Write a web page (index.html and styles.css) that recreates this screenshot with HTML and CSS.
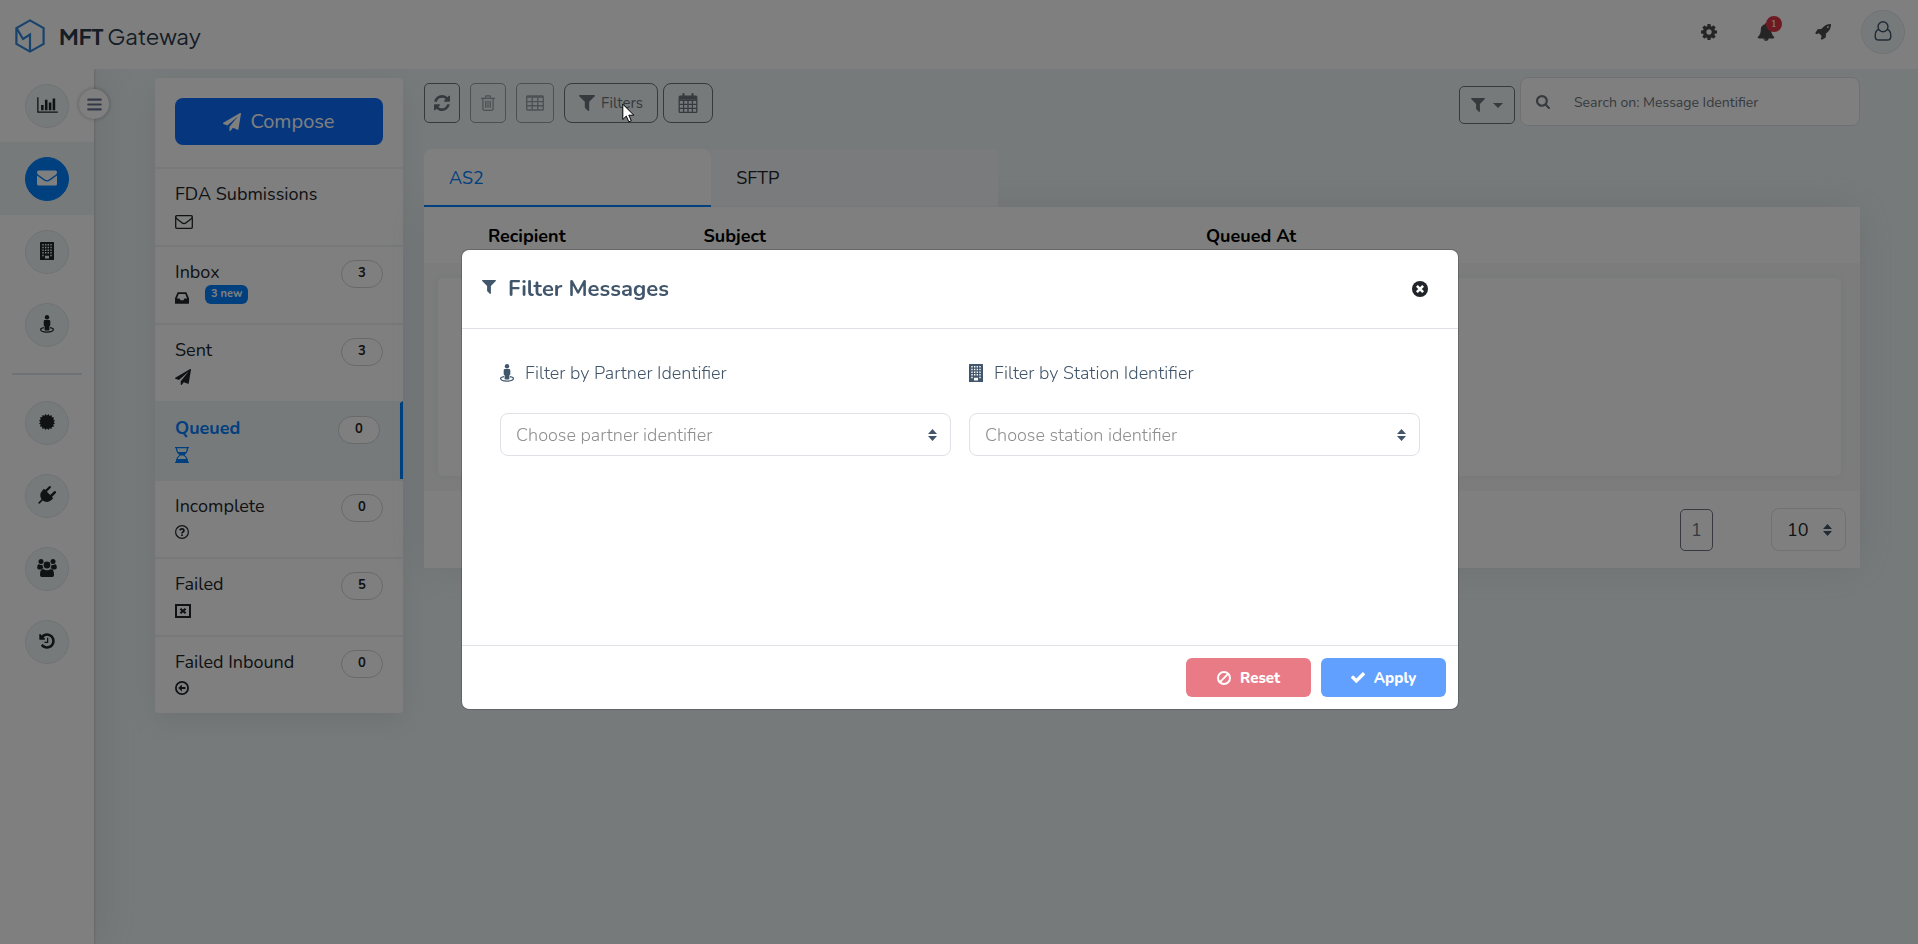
FILE: index.html
```html
<!DOCTYPE html>
<html lang="en">
<head>
  <meta charset="UTF-8" />
  <meta name="viewport" content="width=device-width, initial-scale=1.0"/>
  <title>MFT Gateway</title>
  <link rel="stylesheet" href="styles.css">
</head>
<body>
  <!-- Icons -->
  <svg class="sprite" aria-hidden="true">
    <symbol id="i-chart" viewBox="0 0 2048 1792"><path d="M640 896v512h-256v-512h256zm384-512v1024h-256v-1024h256zm1024 1152v128h-2048v-1536h128v1408h1920zm-640-896v768h-256v-768h256zm384-384v1152h-256v-1152h256z"/></symbol>
    <symbol id="i-mail" viewBox="0 0 16 16"><path d="M0 3.3Q0 2 1.300 2h13.400Q16 2 16 3.300c0 1-.7 1.900-1.600 2.500L9.600 9.200q-1.600 1-3.200 0L1.600 5.800C.7 5.200 0 4.400 0 3.300zM0 5.900q.5.500 1.100.9l4.500 3.200q2.400 1.400 4.800 0l4.500-3.200q.6-.4 1.100-.9v6.800q0 1.300-1.300 1.300H1.300Q0 14 0 12.700z"/></symbol>
    <symbol id="i-mail-o" viewBox="0 0 18 14"><path fill="none" stroke="currentColor" stroke-width="1.300" stroke-linejoin="round" d="M.7 1.800Q.7.700 1.800.700h14.400q1.100 0 1.100 1.100v10.400q0 1.100-1.100 1.100H1.800q-1.100 0-1.100-1.100zM.9 2.500q.6 1 1.800 1.900l4.500 3.500q1.800 1.300 3.600 0l4.500-3.500q1.200-.9 1.800-1.900"/></symbol>
    <symbol id="i-building" viewBox="0 0 14 18"><path fill-rule="evenodd" d="M.6 0h12.800q.6 0 .6.600v16.800q0 .6-.6.600H.6q-.6 0-.6-.6V.6Q0 0 .6 0zM2.300 2v1.500h1.400V2zm2.700 0v1.500h1.400V2zm2.600 0v1.500H9V2zm2.700 0v1.500h1.400V2zM2.300 4.700v1.500h1.400V4.700zm2.700 0v1.500h1.400V4.700zm2.600 0v1.500H9V4.700zm2.700 0v1.500h1.400V4.700zM2.300 7.400v1.500h1.400V7.400zm2.700 0v1.500h1.400V7.400zm2.600 0v1.500H9V7.400zm2.700 0v1.500h1.400V7.400zM2.300 10.100v1.500h1.400v-1.500zm2.700 0v1.500h1.400v-1.500zm2.600 0v1.500H9v-1.500zm2.700 0v1.500h1.400v-1.500zM2.300 12.800v1.500h1.400v-1.500zm8 0v1.500h1.400v-1.500zM5 13.800v2.600h4v-2.600z"/></symbol>
    <symbol id="i-person" viewBox="0 0 14 18"><circle cx="7" cy="2.300" r="2.200"/><path d="M5 4.900h4q1.300 0 1.300 1.300v4q0 .8-.9.800v3.800q0 .7-.7.700H5.300q-.7 0-.7-.7V11q-.9 0-.9-.8v-4q0-1.300 1.300-1.300z"/><path fill="none" stroke="currentColor" stroke-width="1.200" d="M4 12.700c-2 .3-3.400.9-3.400 1.900 0 1.500 2.900 2.500 6.400 2.500s6.400-1 6.400-2.500c0-1-1.400-1.600-3.400-1.900"/></symbol>
    <symbol id="i-cert" viewBox="0 0 16 16"><path d="M8 1.600 9.600 0l1 1.900 2-.8.300 2.200 2.200.3-.8 2L16 6.700 14.600 8 16 9.600l-1.800 1 .8 2-2.200.3-.3 2.200-2-.8L9.600 16 8 14.600 6.400 16l-1-1.800-2 .8-.3-2.200-2.200-.3.800-2L0 9.600 1.500 8 0 6.400l1.800-1-.8-2 2.200-.3.300-2.200 2 .8L6.400 0z"/></symbol>
    <symbol id="i-plug" viewBox="0 0 18 18"><path d="M17.600 5.200q.5.500.5 1t-.5 1L13.900 11l1.300 1.300-1.500 1.500q-1.900 1.900-4.600 2.100-2.400.1-4.400-1.300L1.700 17.600Q1.200 18 .6 17.500t0-1.200l3-3Q2.100 11.300 2.300 9q.2-2.700 2.100-4.600l1.500-1.600 1.300 1.300 3.700-3.700q.5-.5 1.100-.4t.9.900q.2.700-.4 1.200L8.900 5.800l3.300 3.300 3.700-3.700q.8-.8 1.700-.2z"/></symbol>
    <symbol id="i-users" viewBox="0 0 20 18"><circle cx="4" cy="2.600" r="2.500"/><circle cx="16" cy="2.600" r="2.500"/><circle cx="10" cy="6" r="3.400"/><path d="M.2 8.800q0-3.500 1.600-3.500Q4 6.500 5.600 5.900 5.400 8 6.700 9.200 5.300 9.300 4.200 10.400H2Q.2 10.400.2 8.800zm19.600 0q0-3.500-1.600-3.500-2.200 1.200-3.800.6.200 2.100-1.100 3.300 1.400.1 2.500 1.200H18q1.800 0 1.800-1.600zM3 15.400q0-5.400 3-5.500Q10 12.500 14 9.900q3 .1 3 5.500 0 2.600-2.500 2.600h-9Q3 18 3 15.400z"/></symbol>
    <symbol id="i-history" viewBox="0 0 1792 1792"><path d="M1664 896q0 156-61 298t-164 245-245 164-298 61q-172 0-327-72.500t-264-204.500q-7-10-6.500-22.500t8.500-20.500l137-138q10-9 25-9 16 2 23 12 73 95 179 147t225 52q104 0 198.500-40.500t163.500-109.500 109.500-163.500 40.500-198.500-40.500-198.500-109.500-163.500-163.500-109.500-198.500-40.500q-98 0-188 35.500t-160 101.500l137 138q31 30 14 69-17 40-59 40h-448q-26 0-45-19t-19-45v-448q0-42 40-59 39-17 69 14l130 129q107-101 244.500-156.500t284.500-55.500q156 0 298 61t245 164 164 245 61 298zm-640-288v448q0 14-9 23t-23 9h-320q-14 0-23-9t-9-23v-64q0-14 9-23t23-9h224v-352q0-14 9-23t23-9h64q14 0 23 9t9 23z"/></symbol>
    <symbol id="i-bars" viewBox="0 0 16 14"><path fill="none" stroke="currentColor" stroke-width="2.200" stroke-linecap="round" d="M1.300 1.800h13.400M1.300 7h13.400M1.300 12.200h13.400"/></symbol>
    <symbol id="i-plane" viewBox="0 0 1792 1792"><path d="M1764 11q33 24 27 64l-256 1536q-5 29-32 45-14 8-31 8-11 0-24-5l-453-185-242 295q-18 23-49 23-13 0-22-4-19-7-30.500-23.500t-11.500-36.500v-349l864-1059-1069 925-395-162q-37-14-40-55-2-40 32-59l1664-960q15-9 32-9 20 0 36 11z"/></symbol>
    <symbol id="i-inbox" viewBox="128 192 1536 1408"><path d="M1151 960h316q-1-3-2.500-8t-2.500-8l-212-496h-708l-212 496q-1 2-2.500 8t-2.500 8h316l95 192h320zm513 30v482q0 26-19 45t-45 19h-1408q-26 0-45-19t-19-45v-482q0-62 25-123l238-552q10-25 36.500-42t52.500-17h832q26 0 52.500 17t36.500 42l238 552q25 61 25 123z"/></symbol>
    <symbol id="i-hourglass" viewBox="0 0 14 16"><path fill-rule="evenodd" d="M0 0h14v1.300h-.9c0 3-1.500 5.500-3.600 6.700 2.100 1.200 3.600 3.700 3.600 6.700h.9V16H0v-1.300h.9C.9 11.700 2.400 9.200 4.500 8 2.400 6.800.9 4.300.9 1.300H0zm2.200 1.300c0 1.400.4 2.700 1 3.700h7.600c.6-1 1-2.300 1-3.700zM5.600 8.600C4.400 9.300 3.300 10.500 2.700 12h8.600c-.6-1.500-1.700-2.700-2.900-3.400z"/></symbol>
    <symbol id="i-question" viewBox="0 0 14 14"><circle cx="7" cy="7" r="6.400" fill="none" stroke="currentColor" stroke-width="1.200"/><path fill="none" stroke="currentColor" stroke-width="1.800" d="M4.800 5.300Q5.300 3.900 7 3.900t1.900 1.400Q9 6.300 7.900 7 7 7.500 7 8.500"/><path d="M6.100 9.400h1.800v1.700H6.100z"/></symbol>
    <symbol id="i-close-box" viewBox="0 0 16 14"><path fill="none" stroke="currentColor" stroke-width="2" d="M1 1h14v12H1z"/><path fill="none" stroke="currentColor" stroke-width="2.200" d="m5.400 4.700 5.200 4.600m0-4.600L5.400 9.300"/></symbol>
    <symbol id="i-arrow-circle" viewBox="0 0 14 14"><circle cx="7" cy="7" r="6.100" fill="none" stroke="currentColor" stroke-width="1.800"/><path d="M3.200 7 6.900 3.600v2.300h3.600v2.200H6.900v2.300z"/></symbol>
    <symbol id="i-cog" viewBox="128 128 1536 1536"><path d="M1152 896q0-106-75-181t-181-75-181 75-75 181 75 181 181 75 181-75 75-181zm512-109v222q0 12-8 23t-20 13l-185 28q-19 54-39 91 35 50 107 138 10 12 10 25t-9 23q-27 37-99 108t-94 71q-12 0-26-9l-138-108q-44 23-91 38-16 136-29 186-7 28-36 28h-222q-14 0-24.500-8.500t-11.500-21.500l-28-184q-49-16-90-37l-141 107q-10 9-25 9-14 0-25-11-126-114-165-168-7-10-7-23 0-12 8-23 15-21 51-66.500t54-70.500q-27-50-41-99l-183-27q-13-2-21-12.500t-8-23.500v-222q0-12 8-23t19-13l186-28q14-46 39-92-40-57-107-138-10-12-10-24 0-10 9-23 26-36 98.500-107.500t94.500-71.500q13 0 26 10l138 107q44-23 91-38 16-136 29-186 7-28 36-28h222q14 0 24.500 8.500t11.500 21.500l28 184q49 16 90 37l142-107q9-9 24-9 13 0 25 10 129 119 165 170 7 8 7 22 0 12-8 23-15 21-51 66.500t-54 70.500q26 50 41 98l183 28q13 2 21 12.500t8 23.500z"/></symbol>
    <symbol id="i-bell" viewBox="0 0 1792 1792"><path d="M912 1696q0-16-16-16-59 0-101.500-42.500t-42.500-101.500q0-16-16-16t-16 16q0 73 51.500 124.500t124.500 51.500q16 0 16-16zm816-288q0 52-38 90t-90 38h-448q0 106-75 181t-181 75-181-75-75-181h-448q-52 0-90-38t-38-90q50-42 91-88t85-119.500 74.500-158.500 50-206 19.500-260q0-152 117-282.500t307-158.500q-8-19-8-39 0-40 28-68t68-28 68 28 28 68q0 20-8 39 190 28 307 158.500t117 282.500q0 139 19.500 260t50 206 74.500 158.500 85 119.500 91 88z"/></symbol>
    <symbol id="i-rocket" viewBox="0 128 1664 1664"><path d="M1440 448q0-40-28-68t-68-28-68 28-28 68 28 68 68 28 68-28 28-68zm224-288q0 249-75.500 430.500t-253.500 360.500q-81 80-195 176l-20 379q-2 16-16 26l-384 224q-7 4-16 4-12 0-23-9l-64-64q-13-14-8-32l85-276-281-281-276 85q-3 1-9 1-14 0-23-9l-64-64q-17-19-5-39l224-384q10-14 26-16l379-20q96-114 176-195 188-187 358-258t431-71q14 0 24 9.500t10 22.500z"/></symbol>
    <symbol id="i-user" viewBox="0 0 18 21"><g fill="none" stroke="currentColor" stroke-width="1.500"><circle cx="9" cy="6" r="5.200"/><path d="M4.600 9C1.800 9.600.8 12.500.8 16q0 4 3.700 4h9q3.700 0 3.700-4c0-3.500-1-6.400-3.800-7"/></g></symbol>
    <symbol id="i-refresh" viewBox="128 128 1536 1536"><path d="M1639 1056q0 5-1 7-64 268-268 434.500t-478 166.500q-146 0-282.500-55t-243.500-157l-129 129q-19 19-45 19t-45-19-19-45v-448q0-26 19-45t45-19h448q26 0 45 19t19 45-19 45l-137 137q71 66 161 102t187 36q134 0 250-65t186-179q11-17 53-117 8-23 30-23h192q13 0 22.500 9.500t9.500 22.500zm25-800v448q0 26-19 45t-45 19h-448q-26 0-45-19t-19-45 19-45l138-138q-148-137-349-137-134 0-250 65t-186 179q-11 17-53 117-8 23-30 23h-199q-13 0-22.500-9.500t-9.500-22.500v-7q65-268 270-434.500t480-166.500q146 0 284 55.500t245 156.500l130-129q19-19 45-19t45 19 19 45z"/></symbol>
    <symbol id="i-trash" viewBox="0 0 14 16"><path fill="none" stroke="currentColor" stroke-width="1.300" d="M0 3.300h14M4.300 3.300 5 .900h4l.7 2.400M1.900 3.300v10.500q0 1.500 1.200 1.500h7.800q1.200 0 1.200-1.500V3.300M4.700 5.800v7M7 5.800v7M9.300 5.800v7"/></symbol>
    <symbol id="i-table" viewBox="0 0 17 15"><path fill="none" stroke="currentColor" stroke-width="1.300" d="M.7 1.700q0-.8.800-.8h14q.8 0 .8.800v11.600q0 .8-.8.800h-14q-.8 0-.8-.8zM.7 6.200h15.600M.7 10.100h15.600M5.900 2v12M11.100 2v12"/><path d="M1 1h15v1.600H1z"/></symbol>
    <symbol id="i-filter" viewBox="192 256 1408 1408"><path d="M1595 295q17 41-14 70l-493 493v742q0 42-39 59-13 5-25 5-27 0-45-19l-256-256q-19-19-19-45v-486l-493-493q-31-29-14-70 17-39 59-39h1280q42 0 59 39z"/></symbol>
    <symbol id="i-calendar" viewBox="0 0 19 20"><path fill="none" stroke="currentColor" stroke-width="1.300" d="M.7 4q0-.9.900-.9h15.800q.9 0 .9.900v14.400q0 .9-.9.900H1.600q-.9 0-.9-.9zM.7 7.300h17.600M.7 11.300h17.600M.7 15.300h17.600M5.100 7.300v12M9.500 7.300v12M13.900 7.300v12"/><path d="M1 3.200h17v3.500H1z"/><path d="M4 .8q0-.8 1-.8t1 .8v3.600q0 .8-1 .8t-1-.8zM13 .8q0-.8 1-.8t1 .8v3.600q0 .8-1 .8t-1-.8z"/></symbol>
    <symbol id="i-search" viewBox="64 128 1664 1664"><path d="M1216 832q0-185-131.500-316.500t-316.500-131.500-316.500 131.500-131.500 316.500 131.500 316.500 316.500 131.500 316.500-131.500 131.500-316.500zm512 832q0 52-38 90t-90 38q-54 0-90-38l-343-342q-179 124-399 124-143 0-273.500-55.500t-225-150-150-225-55.500-273.500 55.500-273.500 150-225 225-150 273.500-55.500 273.500 55.500 225 150 150 225 55.500 273.500q0 220-124 399l343 343q37 37 37 90z"/></symbol>
    <symbol id="i-sort" viewBox="0 0 9 12"><path d="M4.500 0 9 4.900H0zM4.500 12 0 7.100h9z"/></symbol>
    <symbol id="i-caret" viewBox="0 0 10 5"><path d="M0 0h10L5 5z"/></symbol>
    <symbol id="i-times-circle" viewBox="0 0 16 16"><circle cx="8" cy="8" r="8"/><path fill="none" stroke="#fff" stroke-width="2.600" d="m4.900 4.900 6.200 6.200m0-6.200-6.200 6.200"/></symbol>
    <symbol id="i-ban" viewBox="0 0 14 14"><g fill="none" stroke="currentColor" stroke-width="2"><circle cx="7" cy="7" r="6"/><path d="m2.900 11.100 8.200-8.200"/></g></symbol>
    <symbol id="i-check" viewBox="121 200 1550 1550"><path d="M1671 566q0 40-28 68l-724 724-136 136q-28 28-68 28t-68-28l-136-136-362-362q-28-28-28-68t28-68l136-136q28-28 68-28t68 28l294 295 656-657q28-28 68-28t68 28l136 136q28 28 28 68z"/></symbol>
  </svg>

  <!-- Top bar -->
  <header class="topbar">
    <a href="#" class="brand">
      <svg class="brand-mark" viewBox="0 0 30 34"><path fill="none" stroke="currentColor" stroke-width="2.200" d="m15 1.400 13.600 7.700v15.800L15 32.600 1.400 24.900V9.100zM2 9.800 8 20l7-4.500V32"/></svg>
      <span class="brand-text"><b>MFT</b> Gateway</span>
    </a>
    <nav class="top-actions">
      <a href="#" aria-label="Settings"><svg class="icon-16"><use href="#i-cog"/></svg></a>
      <a href="#" aria-label="Notifications" class="bell"><svg class="icon-18"><use href="#i-bell"/></svg><span class="bell-count">1</span></a>
      <a href="#" aria-label="Getting started"><svg class="icon-16"><use href="#i-rocket"/></svg></a>
      <a href="#" aria-label="Account" class="circle"><svg class="icon-20"><use href="#i-user"/></svg></a>
    </nav>
  </header>

  <div class="layout">
    <!-- Side navigation -->
    <nav class="sidebar">
      <button class="menu-toggle" aria-label="Toggle menu"><svg class="icon-15"><use href="#i-bars"/></svg></button>
      <a href="#" class="side-item" aria-label="Dashboard"><span class="circle"><svg class="icon-chart"><use href="#i-chart"/></svg></span></a>
      <a href="#" class="side-item active" aria-label="Messages"><span class="circle"><svg class="icon-20"><use href="#i-mail"/></svg></span></a>
      <a href="#" class="side-item" aria-label="Stations"><span class="circle"><svg class="icon-18"><use href="#i-building"/></svg></span></a>
      <a href="#" class="side-item" aria-label="Partners"><span class="circle"><svg class="icon-18"><use href="#i-person"/></svg></span></a>
      <hr class="side-line">
      <a href="#" class="side-item" aria-label="Certificates"><span class="circle"><svg class="icon-16"><use href="#i-cert"/></svg></span></a>
      <a href="#" class="side-item" aria-label="Integrations"><span class="circle"><svg class="icon-18"><use href="#i-plug"/></svg></span></a>
      <a href="#" class="side-item" aria-label="Users"><span class="circle"><svg class="icon-20"><use href="#i-users"/></svg></span></a>
      <a href="#" class="side-item" aria-label="History"><span class="circle"><svg class="icon-18"><use href="#i-history"/></svg></span></a>
    </nav>

    <main class="content">
      <!-- Folders -->
      <aside class="folders">
        <div class="compose">
          <button class="compose-button"><svg class="icon-18"><use href="#i-plane"/></svg>Compose</button>
        </div>
        <a href="#" class="folder"><span class="folder-name">FDA Submissions<svg class="icon-18"><use href="#i-mail-o"/></svg></span></a>
        <a href="#" class="folder">
          <span class="folder-name">Inbox<span class="folder-icons"><svg class="icon-14"><use href="#i-inbox"/></svg><span class="new-badge">3 new</span></span></span>
          <span class="count">3</span>
        </a>
        <a href="#" class="folder"><span class="folder-name">Sent<svg class="icon-16"><use href="#i-plane"/></svg></span><span class="count">3</span></a>
        <a href="#" class="folder active"><span class="folder-name">Queued<svg class="icon-glass"><use href="#i-hourglass"/></svg></span><span class="count">0</span></a>
        <a href="#" class="folder"><span class="folder-name">Incomplete<svg class="icon-14"><use href="#i-question"/></svg></span><span class="count">0</span></a>
        <a href="#" class="folder"><span class="folder-name">Failed<svg class="icon-16"><use href="#i-close-box"/></svg></span><span class="count">5</span></a>
        <a href="#" class="folder"><span class="folder-name">Failed Inbound<svg class="icon-14"><use href="#i-arrow-circle"/></svg></span><span class="count">0</span></a>
      </aside>

      <!-- Messages -->
      <section class="messages">
        <div class="toolbar">
          <div class="tool-group">
            <button class="tool" aria-label="Refresh"><svg class="icon-16"><use href="#i-refresh"/></svg></button>
            <button class="tool" aria-label="Delete" disabled><svg class="icon-16"><use href="#i-trash"/></svg></button>
            <button class="tool" aria-label="Columns" disabled><svg class="icon-18"><use href="#i-table"/></svg></button>
            <div class="tool-pair">
              <button class="tool tool-lg"><svg class="icon-16"><use href="#i-filter"/></svg>Filters</button>
              <button class="tool tool-lg" aria-label="Date range"><svg class="icon-20"><use href="#i-calendar"/></svg></button>
            </div>
          </div>
          <div class="search-group">
            <button class="tool search-filter" aria-label="Search field"><svg class="icon-14"><use href="#i-filter"/></svg><svg class="icon-caret"><use href="#i-caret"/></svg></button>
            <label class="search-box"><svg class="icon-14"><use href="#i-search"/></svg><input type="text" id="searchInput" aria-label="Search" placeholder="Search on: Message Identifier"></label>
          </div>
        </div>

        <div class="tabs">
          <button class="tab active">AS2</button>
          <button class="tab">SFTP</button>
        </div>

        <div class="table-card">
          <table class="queue">
            <colgroup><col class="col-check"><col class="col-recipient"><col class="col-subject"><col></colgroup>
            <thead>
              <tr><th></th><th>Recipient</th><th>Subject</th><th>Queued At</th></tr>
            </thead>
            <tbody>
              <tr><td colspan="4"><div class="empty"></div></td></tr>
            </tbody>
          </table>
          <div class="pager">
            <button class="page-number">1</button>
            <div class="select-wrap page-size">
              <select aria-label="Rows per page"><option>10</option></select>
              <svg class="sort-icon"><use href="#i-sort"/></svg>
            </div>
          </div>
        </div>
      </section>
    </main>
  </div>

  <!-- Filter modal -->
  <div class="modal">
    <div class="modal-content" role="dialog" aria-labelledby="filterTitle">
      <div class="modal-header">
        <h2 id="filterTitle"><svg class="icon-14"><use href="#i-filter"/></svg>Filter Messages</h2>
        <button class="close" aria-label="Close"><svg class="icon-16"><use href="#i-times-circle"/></svg></button>
      </div>
      <div class="modal-body">
        <div class="form-group">
          <label for="partnerSelect"><svg class="icon-label"><use href="#i-person"/></svg>Filter by Partner Identifier</label>
          <div class="select-wrap">
            <select id="partnerSelect"><option>Choose partner identifier</option></select>
            <svg class="sort-icon"><use href="#i-sort"/></svg>
          </div>
        </div>
        <div class="form-group">
          <label for="stationSelect"><svg class="icon-label"><use href="#i-building"/></svg>Filter by Station Identifier</label>
          <div class="select-wrap">
            <select id="stationSelect"><option>Choose station identifier</option></select>
            <svg class="sort-icon"><use href="#i-sort"/></svg>
          </div>
        </div>
      </div>
      <div class="modal-footer">
        <button class="reset" disabled><svg class="icon-14"><use href="#i-ban"/></svg>Reset</button>
        <button class="apply" disabled><svg class="icon-14"><use href="#i-check"/></svg>Apply</button>
      </div>
    </div>
  </div>

  <svg class="pointer" viewBox="0 0 13 20" aria-hidden="true"><path fill="#fff" stroke="#000" d="M.8 1.200v15.300l3.500-3.400 2.500 5.700 2.500-1.100-2.500-5.500h5z"/></svg>
</body>
</html>
```

FILE: styles.css
```css
* {
  box-sizing: border-box;
}

body {
  margin: 0;
  min-height: 100vh;
  font-family: Nunito, Lato, "Open Sans", sans-serif;
  font-size: 18px;
  line-height: 24px;
  color: #212529;
  background-color: #edf5f7;
}

a {
  color: inherit;
  text-decoration: none;
}

button, input, select {
  font: inherit;
  color: inherit;
}

svg {
  display: block;
  fill: currentColor;
  flex: none;
}

.sprite {
  position: absolute;
  width: 0;
  height: 0;
}

.icon-14 { width: 14px; height: 14px; }
.icon-15 { width: 15px; height: 15px; }
.icon-16 { width: 16px; height: 16px; }
.icon-18 { width: 18px; height: 18px; }
.icon-20 { width: 20px; height: 20px; }
.icon-chart { width: 21px; height: 18px; }
.icon-glass { width: 14px; height: 16px; }
.icon-label { width: 14px; height: 18px; }
.icon-caret { width: 10px; height: 5px; }

.circle {
  display: flex;
  align-items: center;
  justify-content: center;
  width: 44px;
  height: 44px;
  padding-bottom: 2px;
  border: 1px solid #dfe5e9;
  border-radius: 50%;
  background-color: #edf5f7;
}

/* top bar */
.topbar {
  position: relative;
  z-index: 2;
  display: flex;
  align-items: center;
  justify-content: space-between;
  height: 69px;
  padding: 0 13px 0 15px;
  background-color: #fff;
}

.brand {
  display: flex;
  align-items: center;
  gap: 14px;
  padding-top: 2px;
}

.brand-mark {
  width: 30px;
  height: 34px;
  color: #2f86d8;
}

.brand-text {
  font-family: "Plus Jakarta Sans", Inter, sans-serif;
  font-size: 22px;
  line-height: 28px;
  color: #2b3a4a;
}

.top-actions {
  display: flex;
  align-items: center;
  gap: 40px;
  padding-bottom: 6px;
  color: #4b4b4b;
}

.top-actions .circle {
  margin-left: -10px;
  color: #42566b;
}

.bell {
  position: relative;
}

.bell-count {
  position: absolute;
  top: -7px;
  right: -7px;
  width: 16px;
  height: 16px;
  border-radius: 50%;
  background-color: #dc3545;
  color: #fff;
  font-family: "DejaVu Serif", serif;
  font-size: 10px;
  line-height: 16px;
  text-align: center;
}

/* side navigation */
.layout {
  display: flex;
  min-height: calc(100vh - 69px);
}

.sidebar {
  position: relative;
  z-index: 1;
  flex: none;
  width: 94px;
  background-color: #fff;
  box-shadow: 1px 0 2px rgba(90, 97, 105, 0.2), 12px 0 40px rgba(90, 97, 105, 0.1);
}

.side-item {
  display: flex;
  align-items: center;
  justify-content: center;
  height: 73px;
}

.side-item.active {
  background-color: #edf5f7;
}

.side-item.active .circle {
  background-color: #0080ff;
  border-color: #0080ff;
  color: #fff;
}

.side-line {
  margin: 12px 12px 11px;
  border: 0;
  border-top: 2px solid #dfe5e9;
}

.menu-toggle {
  position: absolute;
  top: 20px;
  right: -15px;
  display: flex;
  align-items: center;
  justify-content: center;
  width: 30px;
  height: 30px;
  padding: 0;
  border: 0;
  border-radius: 50%;
  background-color: #fff;
  color: #6c7590;
  box-shadow: 0 0 4px rgba(0, 0, 0, 0.3);
}

/* content */
.content {
  display: flex;
  flex: 1;
  align-items: flex-start;
  gap: 21px;
  padding: 8px 58px 0 61px;
}

.folders {
  flex: none;
  width: 248px;
  margin-top: 1px;
  border-radius: 4px;
  background-color: #fff;
  box-shadow: 0 8px 30px rgba(90, 97, 105, 0.12);
}

.compose {
  padding: 20px 20px 22px;
}

.compose-button {
  display: flex;
  align-items: center;
  justify-content: center;
  gap: 9px;
  width: 100%;
  height: 47px;
  border: 0;
  border-radius: 8px;
  background-color: #0d6efd;
  color: #fff;
  font-size: 20px;
}

.folder {
  display: flex;
  align-items: flex-start;
  justify-content: space-between;
  height: 78px;
  padding: 13px 20px;
  border-top: 2px solid #edf1f4;
}

.folder-name {
  display: flex;
  flex-direction: column;
  gap: 7px;
}

.folder-icons {
  display: flex;
  align-items: center;
  gap: 16px;
  height: 14px;
}

.new-badge {
  height: 19px;
  margin-bottom: 8px;
  padding: 0 6px;
  border-radius: 6px;
  background-color: #0080ff;
  color: #fff;
  font-size: 11px;
  font-weight: 700;
  line-height: 18px;
}

.count {
  width: 42px;
  height: 28px;
  border: 1px solid #cfd3d6;
  border-radius: 14px;
  background-color: #fff;
  font-size: 13px;
  font-weight: 700;
  line-height: 25px;
  text-align: center;
}

.folder.active {
  border-right: 3px solid #0080ff;
  border-top-color: #edf5f7;
  background-color: #edf5f7;
}

.folder.active .folder-name {
  color: #0080ff;
  font-weight: 700;
}

.messages {
  flex: 1;
  min-width: 0;
}

.toolbar {
  display: flex;
  justify-content: space-between;
  height: 72px;
}

.tool-group {
  display: flex;
  align-items: flex-start;
  gap: 10px;
  padding-top: 6px;
}

.tool-pair {
  display: flex;
  gap: 5px;
}

.tool {
  display: flex;
  align-items: center;
  justify-content: center;
  gap: 6px;
  height: 40px;
  padding: 0 9px;
  border: 1px solid #6c757d;
  border-radius: 5px;
  background: none;
  color: #6c757d;
  font-size: 15px;
}

.tool:disabled {
  opacity: 0.65;
}

.tool-lg {
  padding: 0 14px;
  border-radius: 8px;
}

.search-group {
  display: flex;
  align-items: flex-start;
  gap: 5px;
}

.search-filter {
  gap: 8px;
  height: 38px;
  margin-top: 9px;
  padding: 0 11px;
}

.search-box {
  display: flex;
  align-items: center;
  gap: 24px;
  width: 340px;
  height: 49px;
  padding: 0 15px;
  border: 1px solid #dde3e8;
  border-radius: 8px;
  background-color: #fff;
  color: #6c757d;
}

.search-box input {
  flex: 1;
  min-width: 0;
  padding: 2px 0 0;
  border: 0;
  outline: 0;
  background: none;
  font-size: 14px;
}

.search-box input::placeholder {
  color: #6c757d;
  opacity: 1;
}

.tabs {
  display: flex;
}

.tab {
  width: 20%;
  height: 58px;
  padding: 2px 25px 0;
  border: 0;
  border-bottom: 2px solid #f0f2f4;
  background-color: #f5f7f9;
  text-align: left;
}

.tab.active {
  border-bottom-color: #0080ff;
  border-radius: 8px 8px 0 0;
  background-color: #fff;
  color: #0080ff;
}

.table-card {
  background-color: #fff;
  box-shadow: 0 0 40px rgba(90, 97, 105, 0.12);
}

.queue {
  width: 100%;
  border-collapse: collapse;
  table-layout: fixed;
}

.col-check { width: 64px; }
.col-recipient { width: 15%; }
.col-subject { width: 35%; }

.queue th {
  height: 56px;
  padding: 2px 0 0;
  color: #000;
  font-weight: 700;
  text-align: left;
}

.queue td {
  padding: 15px 19px 15px 14px;
  background-color: #f8f9fa;
}

.empty {
  height: 198px;
  border-radius: 5px;
  background-color: #fff;
  box-shadow: 0 0 10px rgba(0, 0, 0, 0.06);
}

.pager {
  display: flex;
  align-items: center;
  justify-content: flex-end;
  gap: 58px;
  height: 77px;
  padding-right: 14px;
}

.page-number {
  width: 33px;
  height: 42px;
  padding: 0;
  border: 1px solid #6c757d;
  border-radius: 5px;
  background: none;
  color: #6c757d;
}

.select-wrap {
  position: relative;
}

.select-wrap select {
  width: 100%;
  height: 43px;
  padding: 0 32px 0 15px;
  border: 1px solid #dee2e6;
  border-radius: 8px;
  appearance: none;
  background-color: #fff;
}

.sort-icon {
  position: absolute;
  top: 16px;
  right: 14px;
  width: 9px;
  height: 12px;
  color: #42566b;
  pointer-events: none;
}

.page-size {
  width: 75px;
}

/* modal */
.modal {
  position: fixed;
  z-index: 3;
  inset: 0;
  padding: 249px 15px 0 17px;
  background-color: rgba(0, 0, 0, 0.5);
}

.modal-content {
  max-width: 998px;
  margin: 0 auto;
  border: 1px solid rgba(0, 0, 0, 0.18);
  border-radius: 8px;
  background-color: #fff;
  background-clip: padding-box;
  color: #42566b;
}

.modal-header {
  display: flex;
  align-items: center;
  justify-content: space-between;
  height: 79px;
  padding: 0 30px 0 20px;
  border-bottom: 1px solid #dee2e6;
}

.modal-header h2 {
  display: flex;
  gap: 12px;
  margin: 0;
  font-size: 22px;
  font-weight: 700;
}

.modal-header h2 svg {
  margin-top: 3px;
}

.close {
  padding: 0;
  border: 0;
  background: none;
  color: #212529;
}

.modal-body {
  display: flex;
  gap: 18px;
  min-height: 316px;
  padding: 32px 38px;
}

.modal-body .form-group {
  flex: 1;
}

.form-group label {
  display: flex;
  align-items: center;
  gap: 11px;
  margin-bottom: 28px;
  font-weight: 300;
}

.form-group select {
  color: #8f8f8f;
  font-weight: 300;
}

.modal-footer {
  display: flex;
  justify-content: flex-end;
  gap: 10px;
  padding: 12px;
  border-top: 1px solid #dee2e6;
}

.modal-footer button {
  display: flex;
  align-items: center;
  justify-content: center;
  gap: 9px;
  width: 125px;
  height: 39px;
  border: 0;
  border-radius: 6px;
  color: #fff;
  font-size: 15px;
  font-weight: 800;
}

.modal-footer button:disabled {
  opacity: 0.65;
}

.reset {
  background-color: #dc3545;
}

.apply {
  background-color: #0d6efd;
}

.pointer {
  position: absolute;
  z-index: 4;
  top: 103px;
  left: 622px;
  width: 13px;
  height: 20px;
}
```
